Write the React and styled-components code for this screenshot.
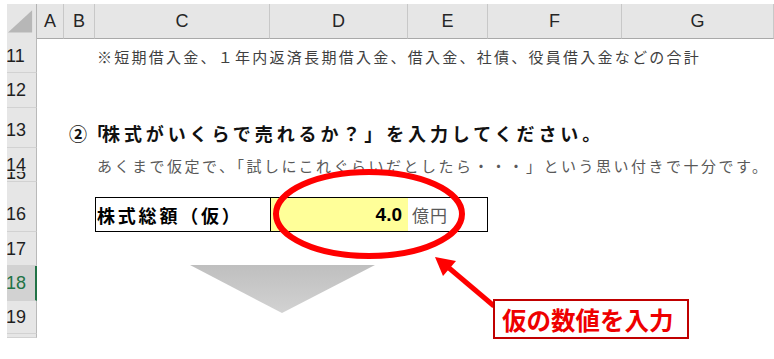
import React from 'react'
import styled, { createGlobalStyle } from 'styled-components'

const GlobalStyle = createGlobalStyle`
  html, body { margin: 0; padding: 0; background: #fff; }
  body { font-family: "Noto Sans CJK JP", "Noto Sans", sans-serif; }
`

const COLS = '30px 27px 31px 175px 138px 80px 134px 1fr'

const Page = styled.div`
  position: relative;
  width: 774px;
  height: 359px;
  overflow: hidden;
  box-sizing: border-box;
  padding: 4px 0 0 7px;
  background: #fff;
`

const Sheet = styled.div`
  display: flex;
  flex-direction: column;
`

const Row = styled.div`
  display: grid;
  grid-template-columns: ${COLS};
  height: ${p => p.$h}px;
`

const ColHead = styled.div`
  background: #e6e6e6;
  border-right: 1px solid #c8c8c8;
  border-bottom: 1px solid #a9a9a9;
  box-sizing: border-box;
  display: flex;
  align-items: center;
  justify-content: center;
  font-family: "Liberation Sans", Arial, sans-serif;
  font-size: 18px;
  color: #262626;
`

const Corner = styled(ColHead)`
  border-right-color: #b4b4b4;
  svg { display: block; }
`

const RowHead = styled.div`
  grid-column: 1;
  background: ${p => (p.$sel ? '#d2d2d2' : '#e6e6e6')};
  color: ${p => (p.$sel ? '#217346' : '#1f1f1f')};
  border-right: ${p => (p.$sel ? '2px solid #217346' : '1px solid #b9b9b9')};
  border-bottom: 1px solid #d2d2d2;
  box-sizing: border-box;
  display: flex;
  align-items: center;
  padding: ${p => p.$pt || 0}px 0 ${p => p.$pb || 0}px 0;
  overflow: hidden;
  font-family: "Liberation Sans", Arial, sans-serif;
  font-size: 18px;
  line-height: 18px;
  span { display: block; margin-left: -1px; }
`

const Line = styled.div`
  grid-column: ${p => p.$col} / -1;
  display: flex;
  align-items: center;
  padding: ${p => p.$pt || 0}px 0 0 ${p => p.$pl || 0}px;
  white-space: nowrap;
  min-width: 0;
  font-family: "Noto Sans CJK JP", sans-serif;
  line-height: 1;
`

const Note = styled(Line)`
  font-size: 15px;
  letter-spacing: ${p => p.$ls}px;
  color: ${p => p.$tone};
`

const Heading = styled(Line)`
  font-size: 18px;
  font-weight: 700;
  letter-spacing: 3.9px;
  color: #111;
`

const Kern = styled.span`
  letter-spacing: ${p => p.$ls}px;
`

const FormBox = styled.div`
  grid-column: 4 / 7;
  align-self: end;
  height: 35px;
  box-sizing: border-box;
  border: 1px solid #000;
  display: grid;
  grid-template-columns: 175px 137px 1fr;
  font-family: "Noto Sans CJK JP", sans-serif;
`

const FieldLabel = styled.div`
  border-right: 1px solid #000;
  display: flex;
  align-items: center;
  padding-left: 1px;
  font-size: 18px;
  font-weight: 700;
  letter-spacing: 2.8px;
  color: #000;
  white-space: nowrap;
`

const ValueCell = styled.div`
  background: #ffff99;
  display: flex;
  align-items: center;
  justify-content: flex-end;
  padding-right: 6px;
  font-family: "Liberation Sans", Arial, sans-serif;
  font-size: 19px;
  font-weight: 700;
  color: #000;
`

const UnitCell = styled.div`
  display: flex;
  align-items: center;
  padding-left: 4px;
  font-size: 17px;
  letter-spacing: 1px;
  color: #595959;
`

const Overlay = styled.svg`
  position: absolute;
  left: 0;
  top: 0;
  pointer-events: none;
`

const Callout = styled.div`
  position: absolute;
  left: 493px;
  top: 299px;
  width: 196px;
  height: 40px;
  box-sizing: border-box;
  border: 2px solid #c00000;
  background: #fff;
  display: flex;
  align-items: center;
  padding-left: 7px;
  font-family: "Noto Sans CJK JP", sans-serif;
  font-size: 24.5px;
  font-weight: 700;
  color: #ee0000;
  white-space: nowrap;
`

const rows = [
  { n: 11, h: 35, pt: 2 },
  { n: 12, h: 35 },
  { n: 13, h: 40, pt: 4 },
  { n: 14, h: 24, pt: 10 },
  { n: 15, h: 10, pb: 7 },
  { n: 16, h: 50, pt: 15 },
  { n: 17, h: 34 },
  { n: 18, h: 35, sel: true },
  { n: 19, h: 33 },
  { n: 20, h: 4, hidden: true },
]

function content(n) {
  if (n === 11) {
    return (
      <Note $col={4} $pl={2} $pt={2} $ls={2.26} $tone="#404040">
        ※短期借入金、１年内返済長期借入金、借入金、社債、役員借入金などの合計
      </Note>
    )
  }
  if (n === 13) {
    return (
      <Heading $col={3} $pl={5} $pt={9}>
        <Kern $ls={0}>②</Kern>
        <Kern $ls={-3}>「</Kern>
        株式がいくらで売れるか？」を入力してください。
      </Heading>
    )
  }
  if (n === 14) {
    return (
      <Note $col={4} $pl={2} $pt={10} $ls={2.5} $tone="#595959">
        あくまで仮定で、「試しにこれぐらいだとしたら・・・」という思い付きで十分です。
      </Note>
    )
  }
  if (n === 16) {
    return (
      <FormBox>
        <FieldLabel>株式総額（仮）</FieldLabel>
        <ValueCell>4.0</ValueCell>
        <UnitCell>億円</UnitCell>
      </FormBox>
    )
  }
  return null
}

export default function App() {
  return (
    <>
      <GlobalStyle />
      <Page>
        <Sheet>
          <Row $h={34}>
            <Corner>
              <svg width="30" height="34" viewBox="0 0 30 34">
                <polygon points="1,29 26,29 26,6" fill="#b7b7b7" />
              </svg>
            </Corner>
            {['A', 'B', 'C', 'D', 'E', 'F', 'G'].map(c => (
              <ColHead key={c}>{c}</ColHead>
            ))}
          </Row>
          {rows.map(r => (
            <Row key={r.n} $h={r.h}>
              <RowHead $sel={r.sel} $pt={r.pt} $pb={r.pb}>
                {!r.hidden && <span>{r.n}</span>}
              </RowHead>
              {content(r.n)}
            </Row>
          ))}
        </Sheet>

        <Overlay width="774" height="359" viewBox="0 0 774 359">
          <defs>
            <linearGradient id="tri" x1="0" y1="0" x2="0" y2="1">
              <stop offset="0" stopColor="#bfbfbf" />
              <stop offset="1" stopColor="#d2d2d2" />
            </linearGradient>
          </defs>
          <polygon points="190,265 375,265 282,313" fill="url(#tri)" />
          <ellipse cx="369" cy="214" rx="93" ry="42" fill="none" stroke="#ff0000" strokeWidth="6" />
          <line x1="494" y1="306" x2="449" y2="268" stroke="#ff0000" strokeWidth="5" />
          <polygon points="435,257 456,261 443,276" fill="#ff0000" />
        </Overlay>

        <Callout>仮の数値を入力</Callout>
      </Page>
    </>
  )
}
